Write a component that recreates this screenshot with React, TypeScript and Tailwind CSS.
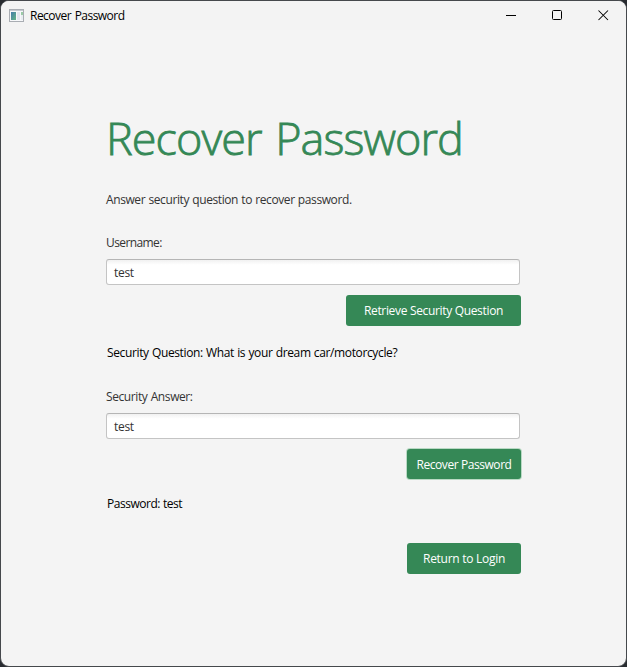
import React from "react";

function AppIcon() {
  return (
    <svg width="16" height="14" viewBox="0 0 16 14" className="ml-2 shrink-0">
      <defs>
        <linearGradient id="pane" x1="0" y1="0" x2="1" y2="1">
          <stop offset="0" stopColor="#447caa" />
          <stop offset="1" stopColor="#65b585" />
        </linearGradient>
      </defs>
      <rect x="0.5" y="0.5" width="14" height="12" fill="#f7f8fa" stroke="#a9adb3" />
      <rect x="1" y="1" width="13" height="1" fill="#c5c9d0" />
      <rect x="2" y="3" width="5" height="8" fill="url(#pane)" />
      <rect x="8" y="3" width="3" height="8" fill="#e3e6ee" />
      <rect x="12" y="3" width="2" height="3" fill="#9bcba6" />
      <rect x="12" y="6" width="2" height="5" fill="#e9edf1" />
    </svg>
  );
}

function TitleBar() {
  return (
    <header className="flex h-[29px] items-center bg-[#f3f3f3]">
      <AppIcon />
      <span className="ml-[5px] text-[12px] leading-4 tracking-[-0.53px] [word-spacing:1px] text-black">Recover Password</span>
      <div className="mr-[17px] ml-auto flex items-center gap-[35px]">
        <svg width="11" height="11" viewBox="0 0 11 11"><path d="M0 5.5H10" stroke="#000" /></svg>
        <svg width="11" height="11" viewBox="0 0 11 11"><rect x="0.5" y="0.5" width="9" height="9" rx="1" fill="none" stroke="#000" /></svg>
        <svg width="11" height="11" viewBox="0 0 11 11"><path d="M0.5 0.5L10 10M10 0.5L0.5 10" stroke="#000" strokeWidth="1.05" /></svg>
      </div>
    </header>
  );
}

function Field({ value }: { value: string }) {
  return (
    <div className="h-[26px] w-[414px] rounded-[3px] border border-[#c4c4c4] border-t-[#b5b5b5] bg-white bg-linear-to-b from-[#f1f1f1] to-white to-20% px-[7px] text-[12px] leading-[25px] tracking-[-0.3px] text-[#323232]">
      {value}
    </div>
  );
}

export default function App() {
  return (
    <div className="h-[667px] w-[627px] bg-[#282b30] font-['Open_Sans','Noto_Sans',sans-serif]">
      <div className="h-full overflow-hidden rounded-[9px] border border-[#45484c] bg-[#f4f4f4]">
        <TitleBar />
        <main className="ml-[105px] flex w-[415px] flex-col pt-[78px] text-[12px] leading-4 tracking-[-0.4px] [word-spacing:0.5px] text-[#333]">
          <h1 className="h-[60px] text-[45px] leading-[60px] font-light tracking-[-0.95px] [word-spacing:3px] whitespace-nowrap text-[#358856] [-webkit-text-stroke:0.8px_#358856]">Recover Password</h1>
          <p className="mt-[24px] whitespace-nowrap">Answer security question to recover password.</p>
          <label className="mt-[27px] tracking-[-0.6px]">Username:</label>
          <div className="mt-[8px]"><Field value="test" /></div>
          <button className="mt-[10px] h-[31px] w-[175px] self-end rounded-[3px] bg-[#358856] tracking-[-0.33px] text-white">Retrieve Security Question</button>
          <p className="mt-[19px] ml-px tracking-[-0.37px] whitespace-nowrap text-black">Security Question: What is your dream car/motorcycle?</p>
          <label className="mt-[28px]">Security Answer:</label>
          <div className="mt-[8px]"><Field value="test" /></div>
          <button className="mt-[10px] h-[30px] w-[114px] self-end rounded-[3px] bg-[#358856] pt-px tracking-[-0.43px] text-white shadow-[0_0_0_1px_#b9d9c4]">Recover Password</button>
          <p className="mt-[17px] ml-px tracking-[-0.48px] text-black">Password: test</p>
          <button className="mt-[31px] h-[31px] w-[114px] self-end rounded-[3px] bg-[#358856] tracking-[-0.28px] text-white">Return to Login</button>
        </main>
      </div>
    </div>
  );
}
